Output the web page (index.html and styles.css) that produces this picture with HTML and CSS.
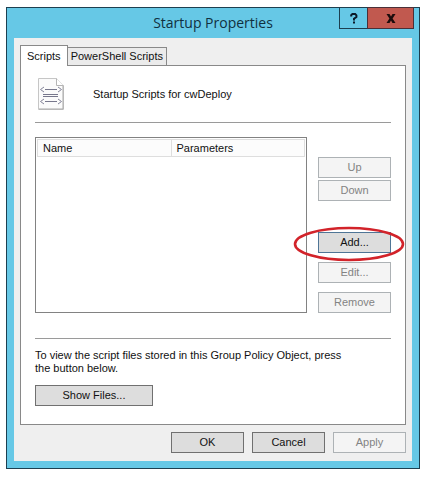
FILE: index.html
```html
<!DOCTYPE html>
<html lang="en">
<head>
  <meta charset="UTF-8">
  <title>Startup Properties</title>
  <link rel="stylesheet" href="styles.css">
</head>
<body>

  <div class="window">
    <header class="titlebar">
      <h1>Startup Properties</h1>
      <div class="controls">
        <button class="control" aria-label="Help">
          <svg width="8" height="11" viewBox="0 0 8 11"><path d="M1.2 3.4V2.2L2.4 1.1H5.2L6.4 2.3V4L4 5.8V7.4M4 8.6V10.6" fill="none" stroke="#0b1a2a" stroke-width="2"/></svg>
        </button>
        <button class="control close" aria-label="Close">
          <svg width="10" height="9" viewBox="0 0 10 9"><path d="M0.5 0H3.5L5 2.5L6.5 0H9.5L6.6 4.5L9.5 9H6.5L5 6.5L3.5 9H0.5L3.4 4.5Z" fill="#1c0c0c"/></svg>
        </button>
      </div>
    </header>

    <main class="client">
      <div class="tabs" role="tablist">
        <button class="tab active" role="tab" aria-selected="true">Scripts</button>
        <button class="tab" role="tab" aria-selected="false">PowerShell Scripts</button>
      </div>

      <section class="panel" role="tabpanel">
        <div class="heading">
          <svg class="script-icon" width="26" height="32" viewBox="0 0 26 32" fill="none">
            <path d="M0.5 0.5H18.5L25.5 7.5V31.5H0.5Z" fill="#fbfbfb" stroke="#c6c6c6"/>
            <path d="M18.5 0.5V7.5H25.5" fill="#fff" stroke="#b5b5b5"/>
            <path d="M25 8V31H1" stroke="#a9a9a9"/>
            <path d="M6 9L2.5 11.5L6 14M20 9L23.5 11.5L20 14M6 21L2.5 23.5L6 26M20 21L23.5 23.5L20 26" stroke="#85859a"/>
            <path d="M7 11.5H19M5 16.5H20M5 18.5H20M7 23.5H19" stroke="#77778c"/>
          </svg>
          <span>Startup Scripts for cwDeploy</span>
        </div>

        <hr>

        <div class="scripts">
          <div class="list">
            <table>
              <thead>
                <tr><th class="name">Name</th><th>Parameters</th></tr>
              </thead>
            </table>
          </div>
          <div class="actions">
            <div class="group order">
              <button class="btn" disabled>Up</button>
              <button class="btn" disabled>Down</button>
            </div>
            <div class="group edit">
              <div class="marked">
                <button class="btn focused">Add...</button>
                <svg class="ring" width="112" height="36" viewBox="0 0 112 36"><ellipse cx="56" cy="18" rx="54" ry="16" fill="none" stroke="#d2232a" stroke-width="2.6"/></svg>
              </div>
              <button class="btn" disabled>Edit...</button>
              <button class="btn" disabled>Remove</button>
            </div>
          </div>
        </div>

        <hr class="tight">

        <p>To view the script files stored in this Group Policy Object, press<br>the button below.</p>
        <button class="btn wide">Show Files...</button>
      </section>

      <footer class="footer">
        <button class="btn">OK</button>
        <button class="btn">Cancel</button>
        <button class="btn" disabled>Apply</button>
      </footer>
    </main>
  </div>

</body>
</html>
```
FILE: styles.css
```css
* {
  box-sizing: border-box;
}

body {
  margin: 0;
  padding: 7px 7px 8px 6px;
  background: #fff;
  color: #111;
  font: 11px/13px "Liberation Sans", Arial, sans-serif;
}

button {
  font: inherit;
  color: inherit;
  padding: 0;
}

.window {
  background: #66c8e6;
  border: 1px solid #1d3f50;
  padding: 0 7px 7px;
}

/* title bar */

.titlebar {
  display: grid;
  grid-template-columns: 1fr auto 1fr;
  height: 30px;
}

.titlebar h1 {
  grid-column: 2;
  margin: 0;
  font: 14px/30px "Open Sans", "Noto Sans", sans-serif;
  color: #10303f;
}

.controls {
  display: flex;
  justify-content: flex-end;
  align-items: flex-start;
  margin: -1px -2px 0 0;
}

.control {
  display: flex;
  align-items: center;
  justify-content: center;
  width: 29px;
  height: 22px;
  background: #66c8e6;
  border: 1px solid #1d3f50;
}

.control.close {
  width: 47px;
  margin-left: -1px;
  background: #c1594f;
  border-color: #4a3038;
}

/* tabs */

.client {
  background: #efefef;
  padding: 7px 6px 8px;
}

.tabs {
  display: flex;
  align-items: flex-end;
}

.tab {
  height: 18px;
  padding: 0 3px;
  background: #ebebeb;
  border: 1px solid #898989;
  border-bottom: 0;
  border-left: 0;
}

.tab.active {
  position: relative;
  height: 21px;
  margin-bottom: -1px;
  padding: 0 6px;
  background: #fff;
  border-left: 1px solid #898989;
}

.panel {
  background: #fff;
  border: 1px solid #898989;
  padding: 12px 14px 18px;
}

.heading {
  display: flex;
  align-items: center;
  gap: 29px;
  padding-left: 3px;
}

hr {
  margin: 12px 0 14px;
  border: 0;
  border-top: 1px solid #9a9a9a;
}

hr.tight {
  margin-bottom: 10px;
}

/* script list */

.scripts {
  display: flex;
  gap: 11px;
  margin-bottom: 25px;
}

.list {
  flex: 1;
  border: 1px solid #828282;
  padding: 1px;
}

table {
  width: 100%;
  border-collapse: collapse;
}

th {
  height: 17px;
  padding: 0 5px;
  background: #fcfcfc;
  border: 1px solid #dedede;
  font-weight: normal;
  text-align: left;
}

th.name {
  width: 50%;
}

.actions {
  display: flex;
  flex-direction: column;
  gap: 31px;
  padding-top: 20px;
}

.group {
  display: flex;
  flex-direction: column;
}

.order {
  gap: 2px;
}

.edit {
  gap: 9px;
}

.marked {
  position: relative;
}

.ring {
  position: absolute;
  left: -25px;
  top: -6px;
  pointer-events: none;
}

/* buttons */

.btn {
  display: block;
  width: 73px;
  height: 21px;
  background: #dddddd;
  border: 1px solid #707070;
}

.btn.focused {
  border-color: #4f7596;
}

.btn:disabled {
  background: #f4f4f4;
  border-color: #adb2b5;
  color: #838383;
}

.btn.wide {
  width: 118px;
}

p {
  margin: 0 0 10px;
}

.footer {
  display: flex;
  justify-content: flex-end;
  gap: 8px;
  padding-top: 7px;
}
```
